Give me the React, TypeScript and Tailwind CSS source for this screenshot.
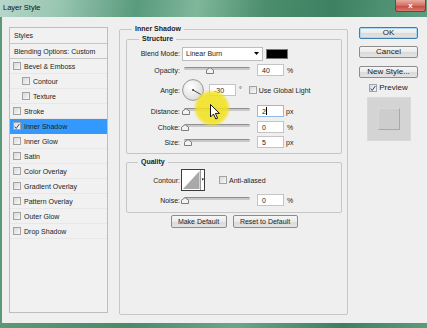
import React from "react";

function Check({ checked = false }: { checked?: boolean }) {
  return (
    <div className="w-[8px] h-[8px] shrink-0 border border-[#a3a3a3] bg-[linear-gradient(135deg,#d9d9d9,#f8f8f8)] flex items-center justify-center">
      {checked && (
        <svg width="7" height="7" viewBox="0 0 7 7">
          <path d="M0.8 3.6 L2.6 5.8 L6.2 0.6" fill="none" stroke="#2a3f86" strokeWidth="1.1" />
        </svg>
      )}
    </div>
  );
}

function Slider({ pos }: { pos: number }) {
  return (
    <div className="relative w-[66px] h-[12px] shrink-0">
      <div className="absolute left-0 right-0 top-[3px] h-[3px] rounded-[2px] bg-[#c9c9c9] border-t border-[#8f8f8f]" />
      <svg className="absolute top-[3px]" style={{ left: pos - 4 }} width="8" height="7" viewBox="0 0 8 7">
        <path d="M0.5 6.5 V3.2 L4 0.6 L7.5 3.2 V6.5 Z" fill="#f3f3f3" stroke="#7c7c7c" />
      </svg>
    </div>
  );
}

function Field({ value, focus = false, className = "" }: { value: string; focus?: boolean; className?: string }) {
  return (
    <div
      className={`w-[27px] h-[12px] shrink-0 bg-white border ${focus ? "border-[#8fbbe6]" : "border-[#c4c4c4]"} flex items-center pl-[4px] text-[7px] leading-none ${className}`}
    >
      <span>{value}</span>
      {focus && <span className="ml-[0.5px] w-px h-[8px] bg-black" />}
    </div>
  );
}

function Btn({ children, className = "", def = false }: { children: React.ReactNode; className?: string; def?: boolean }) {
  return (
    <div
      className={`flex items-center justify-center rounded-[2px] border ${
        def ? "border-[#3c7fb1] shadow-[inset_0_0_0_1px_#a7d8f5]" : "border-[#8c8c8c]"
      } bg-[linear-gradient(#f6f6f6,#ebebeb_50%,#dadada_51%,#e3e3e3)] leading-none ${className}`}
    >
      {children}
    </div>
  );
}

const items: { label: string; indent?: boolean; checked?: boolean; selected?: boolean }[] = [
  { label: "Bevel & Emboss" },
  { label: "Contour", indent: true },
  { label: "Texture", indent: true },
  { label: "Stroke" },
  { label: "Inner Shadow", checked: true, selected: true },
  { label: "Inner Glow" },
  { label: "Satin" },
  { label: "Color Overlay" },
  { label: "Gradient Overlay" },
  { label: "Pattern Overlay" },
  { label: "Outer Glow" },
  { label: "Drop Shadow" },
];

function Label({ children }: { children: React.ReactNode }) {
  return <div className="w-[53px] shrink-0 text-right text-[7px] leading-none">{children}</div>;
}

export default function App() {
  return (
    <div className="relative w-[427px] h-[328px] overflow-hidden font-['Liberation_Sans',Arial,sans-serif] text-[#1c1c1c] bg-[linear-gradient(90deg,#5b9878,#4a8a69_30%,#6aa688_55%,#3f7f5f_80%,#5d9a7c)]">
      {/* title bar */}
      <div className="h-[17px] flex items-start justify-between bg-[linear-gradient(100deg,#b7d6c9_0%,#98c6b1_14%,#5a9a7c_32%,#7fb79b_46%,#4b8d6c_62%,#3d8162_78%,#5e9e80_100%)]">
        <span className="pl-[3px] pt-[4px] text-[7.5px] leading-none text-[#111]">Layer Style</span>
        <div className="w-[31px] h-[12px] mr-[1px] rounded-b-[3px] border border-t-0 border-[#8e3a32] bg-[linear-gradient(#e9aca2,#d46e62_50%,#c2483c_51%,#d77a6d)] flex items-center justify-center text-white font-bold text-[8px] leading-none">
          x
        </div>
      </div>

      {/* dialog body */}
      <div className="ml-[2px] w-[425px] h-[306px] bg-[#efefef] flex items-start">
        {/* left list */}
        <div className="ml-[7px] mt-[10px] w-[99px] h-[286px] border border-[#bdbdbd] bg-[#f1f1f1] text-[7px] leading-none">
          <div className="h-[16px] flex items-center pl-[4px] border-b border-[#c6c6c6]">Styles</div>
          <div className="h-[15px] flex items-center pl-[4px] border-b border-[#c6c6c6]">Blending Options: Custom</div>
          {items.map((it) => (
            <div
              key={it.label}
              className={`h-[15px] flex items-center border-b ${it.selected ? "bg-[#3399ff] border-[#3399ff]" : "border-[#e7e7e7]"} ${it.indent ? "pl-[12px]" : "pl-[3px]"}`}
            >
              <Check checked={it.checked} />
              <span className="ml-[3px]">{it.label}</span>
            </div>
          ))}
        </div>

        {/* main group */}
        <fieldset className="ml-[11px] mt-[7px] w-[229px] h-[291px] min-w-0 border border-[#c6c6c6] rounded-[2px] pl-[6px] pr-[5px]">
          <legend className="ml-[6px] px-[3px] text-[7px] font-bold leading-[10px]">Inner Shadow</legend>

          <fieldset className="w-[216px] min-w-0 border border-[#c6c6c6] rounded-[2px] pb-[5px]">
            <legend className="ml-[12px] px-[3px] text-[7px] font-bold leading-[10px]">Structure</legend>

            <div className="mt-[2px] h-[15px] flex items-center">
              <Label>Blend Mode:</Label>
              <div className="ml-[2px] w-[81px] h-[14px] bg-white border border-[#bdbdbd] flex items-center justify-between pl-[3px] pr-[3px] text-[7px] leading-none">
                <span>Linear Burn</span>
                <svg width="5" height="3" viewBox="0 0 5 3">
                  <path d="M0 0 H5 L2.5 3 Z" fill="#000" />
                </svg>
              </div>
              <div className="ml-[3px] w-[22px] h-[10px] bg-black border border-[#777]" />
            </div>

            <div className="mt-[3px] h-[12px] flex items-center">
              <Label>Opacity:</Label>
              <div className="ml-[4px]">
                <Slider pos={26} />
              </div>
              <Field value="40" className="ml-[7px]" />
              <span className="ml-[3px] text-[7px] leading-none">%</span>
            </div>

            <div className="mt-[3px] h-[22px] flex items-center">
              <Label>Angle:</Label>
              <svg className="ml-[2px] shrink-0" width="22" height="22" viewBox="0 0 22 22">
                <defs>
                  <radialGradient id="ag" cx="40%" cy="35%" r="70%">
                    <stop offset="0%" stopColor="#ffffff" />
                    <stop offset="100%" stopColor="#dadada" />
                  </radialGradient>
                </defs>
                <circle cx="11" cy="11" r="10.4" fill="url(#ag)" stroke="#8e8e8e" strokeWidth="0.9" />
                <line x1="11" y1="11" x2="18.8" y2="15.5" stroke="#333" strokeWidth="0.9" />
                <circle cx="11" cy="11" r="0.9" fill="#333" />
              </svg>
              <Field value="-30" className="ml-[5px]" />
              <span className="ml-[3px] text-[7px] leading-none self-start mt-[7px]">°</span>
              <div className="ml-[7px]">
                <Check />
              </div>
              <span className="ml-[2px] text-[7px] leading-none">Use Global Light</span>
            </div>

            <div className="mt-[4px] h-[12px] flex items-center">
              <Label>Distance:</Label>
              <div className="ml-[4px]">
                <Slider pos={2} />
              </div>
              <Field value="2" focus className="ml-[7px]" />
              <span className="ml-[2px] text-[7px] leading-none">px</span>
            </div>

            <div className="mt-[4px] h-[12px] flex items-center">
              <Label>Choke:</Label>
              <div className="ml-[4px]">
                <Slider pos={0.5} />
              </div>
              <Field value="0" className="ml-[7px]" />
              <span className="ml-[3px] text-[7px] leading-none">%</span>
            </div>

            <div className="mt-[3px] h-[12px] flex items-center">
              <Label>Size:</Label>
              <div className="ml-[4px]">
                <Slider pos={4} />
              </div>
              <Field value="5" className="ml-[7px]" />
              <span className="ml-[2px] text-[7px] leading-none">px</span>
            </div>
          </fieldset>

          <fieldset className="mt-[3px] w-[216px] min-w-0 border border-[#c6c6c6] rounded-[2px] pb-[6px]">
            <legend className="ml-[11px] px-[3px] text-[7px] font-bold leading-[10px]">Quality</legend>

            <div className="mt-[2px] h-[22px] flex items-center">
              <Label>Contour:</Label>
              <svg className="ml-[1px] shrink-0" width="24" height="22" viewBox="0 0 24 22">
                <rect x="0.5" y="0.5" width="23" height="21" fill="#ffffff" stroke="#3c3c3c" />
                <polygon points="2,20 18.5,2 18.5,20" fill="#a9a9a9" />
                <line x1="19.5" y1="1" x2="19.5" y2="21" stroke="#9a9a9a" />
                <polygon points="20.6,9.5 23,9.5 21.8,11.5" fill="#000" />
              </svg>
              <div className="ml-[14px]">
                <Check />
              </div>
              <span className="ml-[2px] text-[7px] leading-none">Anti-aliased</span>
            </div>

            <div className="mt-[3px] h-[12px] flex items-center">
              <Label>Noise:</Label>
              <div className="ml-[4px]">
                <Slider pos={0.5} />
              </div>
              <Field value="0" className="ml-[7px]" />
              <span className="ml-[3px] text-[7px] leading-none">%</span>
            </div>
          </fieldset>

          <div className="mt-[2px] flex justify-center gap-[6px] text-[7px]">
            <Btn className="w-[56px] h-[13px]">Make Default</Btn>
            <Btn className="w-[65px] h-[13px]">Reset to Default</Btn>
          </div>
        </fieldset>

        {/* right column */}
        <div className="ml-[11px] mt-[10px] w-[59px] flex flex-col text-[8px]">
          <Btn def className="h-[12px]">OK</Btn>
          <Btn className="mt-[7px] h-[12px]">Cancel</Btn>
          <Btn className="mt-[8px] h-[12px]">New Style...</Btn>
          <div className="mt-[6px] h-[8px] flex items-center justify-center">
            <Check checked />
            <span className="ml-[2px] leading-none">Preview</span>
          </div>
          <div className="mt-[5px] mx-auto w-[44px] h-[44px] bg-[#d4d4d4] border border-[#dadada] flex items-center justify-center">
            <div className="w-[22px] h-[22px] bg-[#cdcdcd] border border-t-[#d8d8d8] border-l-[#d8d8d8] border-r-[#a9a9a9] border-b-[#a9a9a9]" />
          </div>
        </div>
      </div>

      {/* cursor highlight overlay */}
      <div className="absolute left-[195px] top-[91px] w-[34px] h-[34px] rounded-full bg-[#f3e21c] opacity-85 blur-[1px]" />
      <svg className="absolute left-[210px] top-[104px]" width="10" height="16" viewBox="0 0 10 16">
        <path d="M0.5 0.5 V13 L3.5 10 L5.8 15 L7.6 14.2 L5.4 9.4 L9.5 9.4 Z" fill="#fff" stroke="#000" strokeWidth="0.9" strokeLinejoin="round" />
      </svg>
    </div>
  );
}
